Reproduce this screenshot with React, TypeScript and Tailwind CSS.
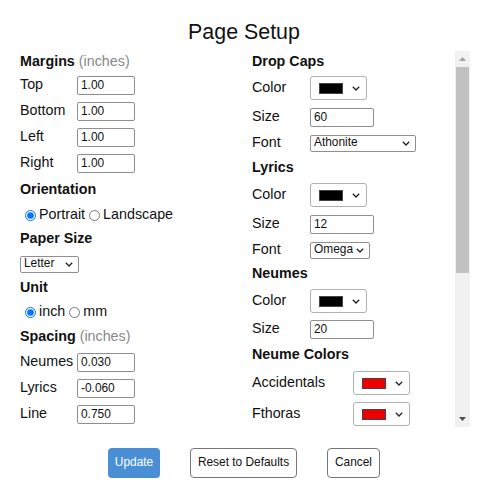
import React from "react";

const Chevron: React.FC = () => (
  <svg width="8" height="5" viewBox="0 0 8 5" className="shrink-0">
    <path d="M0.8 0.8 L4 4 L7.2 0.8" fill="none" stroke="#222" strokeWidth="1.3" />
  </svg>
);

const TextBox: React.FC<{ value: string; width: string }> = ({ value, width }) => (
  <input
    readOnly
    value={value}
    className={`${width} h-[19px] border border-[#8f8f8f] rounded-[2px] bg-white px-[3px] text-[11.9px] text-[#111] outline-none`}
  />
);

const DropDown: React.FC<{ value: string; width: string }> = ({ value, width }) => (
  <div
    className={`${width} h-[17px] border border-[#8f8f8f] rounded-[2px] bg-white flex items-center pl-[3px] pr-[5px] text-[11.9px] text-[#111]`}
  >
    <span>{value}</span>
    <span className="ml-auto">
      <Chevron />
    </span>
  </div>
);

const ColorPicker: React.FC<{ color: string }> = ({ color }) => (
  <div className="w-[57px] h-[24px] border border-[#b0b0b0] rounded-[3px] bg-white flex items-center pl-[8px] pr-[6px]">
    <div className={`w-[24px] h-[11px] border border-[#444] ${color}`} />
    <span className="ml-auto">
      <Chevron />
    </span>
  </div>
);

const Row: React.FC<{ label: string; h: string; labelW: string; children: React.ReactNode }> = ({
  label,
  h,
  labelW,
  children,
}) => (
  <div className={`flex items-center ${h}`}>
    <span className={`${labelW} shrink-0`}>{label}</span>
    {children}
  </div>
);

const Header: React.FC<{ h: string; children: React.ReactNode }> = ({ h, children }) => (
  <div className={`flex items-center font-bold ${h}`}>{children}</div>
);

// classic scrollbar, drawn since headless hides the native one
const ScrollBar: React.FC = () => (
  <div className="w-[15px] shrink-0 bg-[#f1f1f1] flex flex-col">
    <div className="h-[16px] flex items-center justify-center">
      <svg width="7" height="4" viewBox="0 0 7 4">
        <path d="M0 4 L3.5 0 L7 4 Z" fill="#a3a3a3" />
      </svg>
    </div>
    <div className="mx-[1px] h-[206px] bg-[#c1c1c1]" />
    <div className="flex-1" />
    <div className="h-[16px] flex items-center justify-center">
      <svg width="7" height="4" viewBox="0 0 7 4">
        <path d="M0 0 L7 0 L3.5 4 Z" fill="#505050" />
      </svg>
    </div>
  </div>
);

export default function App() {
  return (
    <div className="w-[488px] h-[492px] bg-white text-[#111] font-['Liberation_Sans',Arial,sans-serif] text-[14.3px]">
      <div className="h-[51px] pt-[22px] text-center text-[21.4px] leading-none">Page Setup</div>

      <div className="ml-[15px] w-[455px] h-[376px] overflow-hidden flex">
        <div className="w-[237px] pl-[5px] shrink-0">
          <Header h="h-[21px]">
            Margins <span className="font-normal text-[#888] ml-[4px]">(inches)</span>
          </Header>
          <Row label="Top" h="h-[26px]" labelW="w-[57px]">
            <TextBox value="1.00" width="w-[58px]" />
          </Row>
          <Row label="Bottom" h="h-[26px]" labelW="w-[57px]">
            <TextBox value="1.00" width="w-[58px]" />
          </Row>
          <Row label="Left" h="h-[26px]" labelW="w-[57px]">
            <TextBox value="1.00" width="w-[58px]" />
          </Row>
          <Row label="Right" h="h-[26px]" labelW="w-[57px]">
            <TextBox value="1.00" width="w-[58px]" />
          </Row>
          <Header h="h-[27px]">Orientation</Header>
          <div className="flex items-center h-[24px]">
            <input type="radio" name="orient" defaultChecked className="w-[11px] h-[11px] ml-[5px] mr-[3px] accent-[#0075ff]" />
            <span>Portrait</span>
            <input type="radio" name="orient" className="w-[11px] h-[11px] ml-[4px] mr-[3px]" />
            <span>Landscape</span>
          </div>
          <Header h="h-[24px]">Paper Size</Header>
          <div className="flex items-center h-[26px]">
            <DropDown value="Letter" width="w-[59px]" />
          </div>
          <Header h="h-[22px]">Unit</Header>
          <div className="flex items-center h-[26px]">
            <input type="radio" name="unit" defaultChecked className="w-[11px] h-[11px] ml-[5px] mr-[3px] accent-[#0075ff]" />
            <span>inch</span>
            <input type="radio" name="unit" className="w-[11px] h-[11px] ml-[4px] mr-[3px]" />
            <span>mm</span>
          </div>
          <Header h="h-[24px]">
            Spacing <span className="font-normal text-[#888] ml-[4px]">(inches)</span>
          </Header>
          <Row label="Neumes" h="h-[26px]" labelW="w-[57px]">
            <TextBox value="0.030" width="w-[58px]" />
          </Row>
          <Row label="Lyrics" h="h-[26px]" labelW="w-[57px]">
            <TextBox value="-0.060" width="w-[58px]" />
          </Row>
          <Row label="Line" h="h-[26px]" labelW="w-[57px]">
            <TextBox value="0.750" width="w-[58px]" />
          </Row>
        </div>

        <div className="flex-1">
          <Header h="h-[21px]">Drop Caps</Header>
          <Row label="Color" h="h-[32px]" labelW="w-[58px]">
            <ColorPicker color="bg-black" />
          </Row>
          <Row label="Size" h="h-[26px]" labelW="w-[58px]">
            <TextBox value="60" width="w-[64px]" />
          </Row>
          <Row label="Font" h="h-[26px]" labelW="w-[58px]">
            <DropDown value="Athonite" width="w-[106px]" />
          </Row>
          <Header h="h-[24px]">Lyrics</Header>
          <Row label="Color" h="h-[30px]" labelW="w-[58px]">
            <ColorPicker color="bg-black" />
          </Row>
          <Row label="Size" h="h-[28px]" labelW="w-[58px]">
            <TextBox value="12" width="w-[64px]" />
          </Row>
          <Row label="Font" h="h-[24px]" labelW="w-[58px]">
            <DropDown value="Omega" width="w-[60px]" />
          </Row>
          <Header h="h-[24px]">Neumes</Header>
          <Row label="Color" h="h-[30px]" labelW="w-[58px]">
            <ColorPicker color="bg-black" />
          </Row>
          <Row label="Size" h="h-[26px]" labelW="w-[58px]">
            <TextBox value="20" width="w-[64px]" />
          </Row>
          <Header h="h-[26px]">Neume Colors</Header>
          <Row label="Accidentals" h="h-[30px]" labelW="w-[101px]">
            <ColorPicker color="bg-[#ee0000]" />
          </Row>
          <Row label="Fthoras" h="h-[32px]" labelW="w-[101px]">
            <ColorPicker color="bg-[#ee0000]" />
          </Row>
        </div>

        <ScrollBar />
      </div>

      <div className="mt-[21px] flex justify-center gap-[30px] text-[11.9px]">
        <button className="w-[52px] h-[30px] rounded-[4px] bg-[#4a8fd6] text-white">Update</button>
        <button className="w-[107px] h-[30px] rounded-[4px] border border-[#767676] bg-white text-[#111]">
          Reset to Defaults
        </button>
        <button className="w-[53px] h-[30px] rounded-[4px] border border-[#767676] bg-white text-[#111]">
          Cancel
        </button>
      </div>
    </div>
  );
}
